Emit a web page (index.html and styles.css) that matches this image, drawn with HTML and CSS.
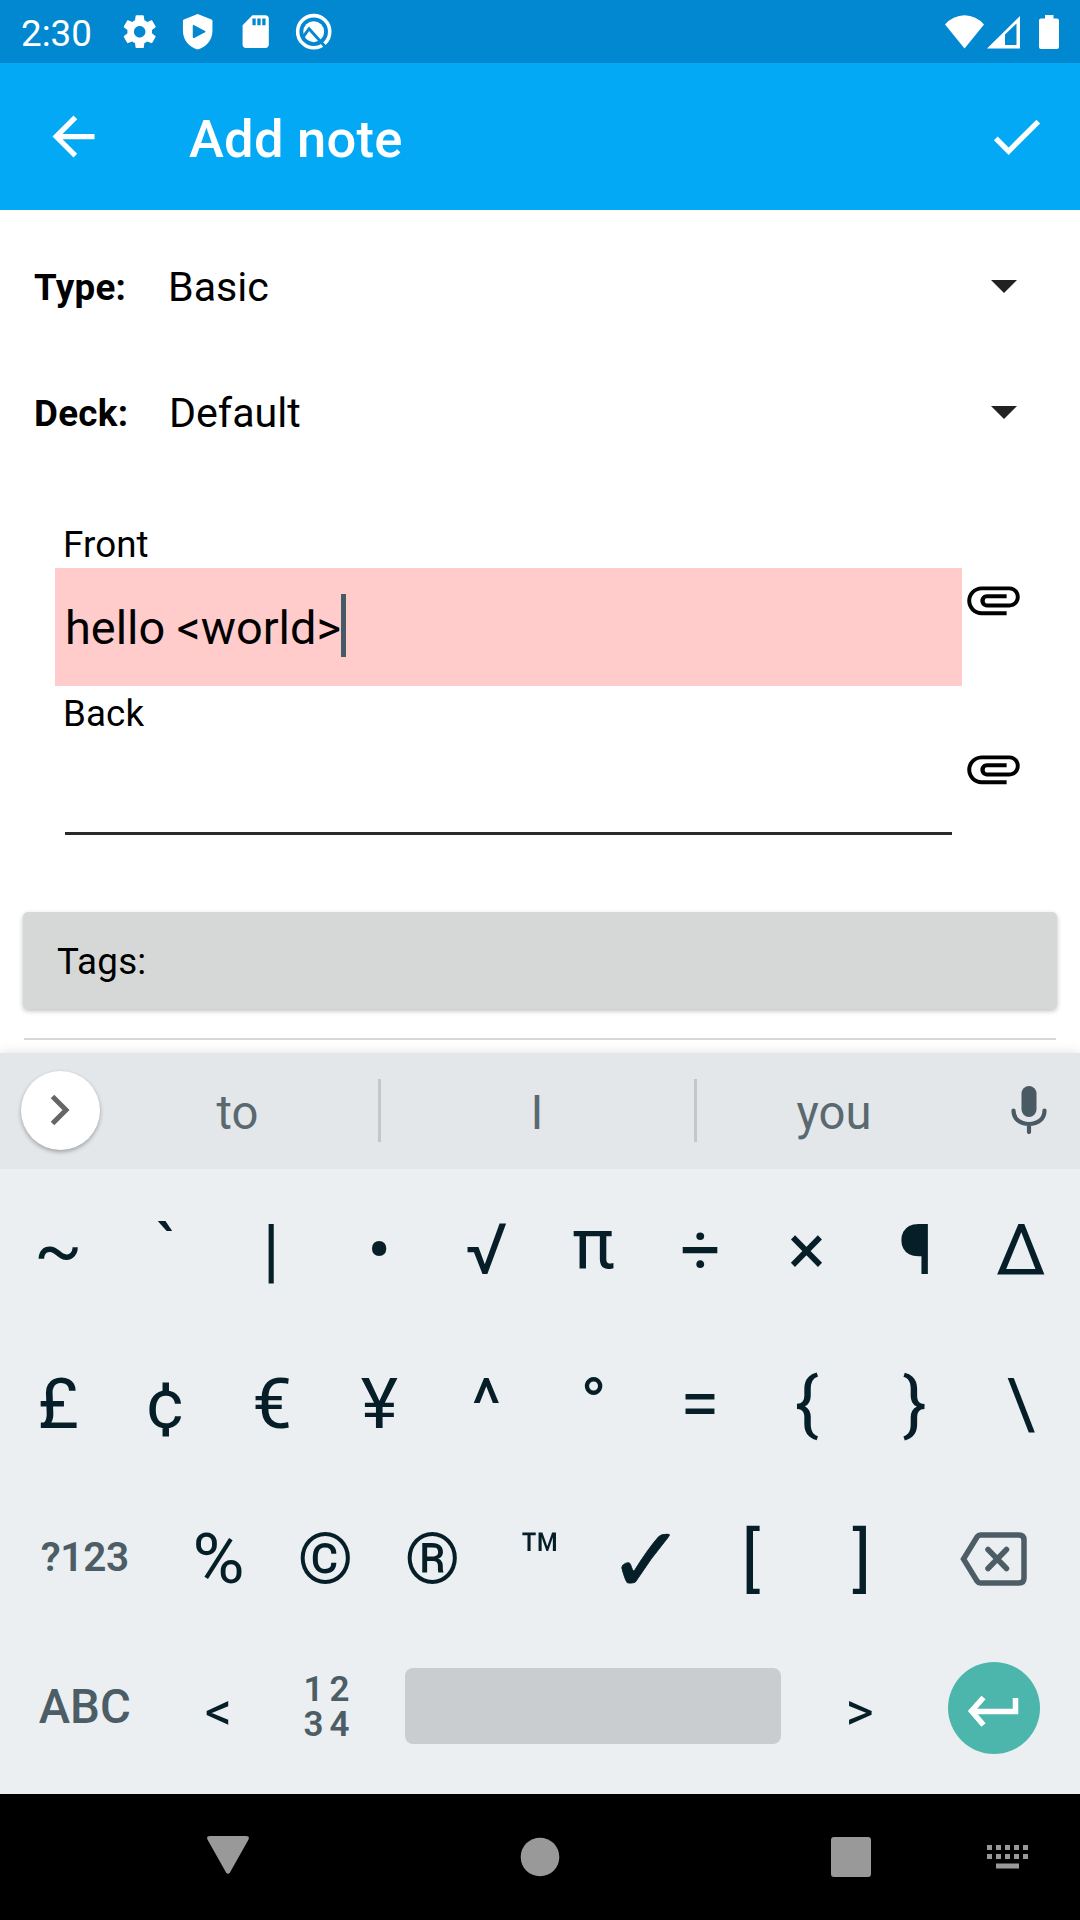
FILE: index.html
```html
<!DOCTYPE html>
<html lang="en">
<head>
<meta charset="utf-8">
<title>Add note</title>
<link rel="stylesheet" href="styles.css">
</head>
<body>
<div class="screen">
  <header class="status">
    <span class="clock">2:30</span>
    <div class="status-left">
      <svg class="sicon" viewBox="0 0 24 24"><path d="M19.43 12.98c.04-.32.07-.64.07-.98s-.03-.66-.07-.98l2.11-1.65c.19-.15.24-.42.12-.64l-2-3.46c-.12-.22-.39-.3-.61-.22l-2.49 1c-.52-.4-1.08-.73-1.69-.98l-.38-2.65C14.46 2.18 14.25 2 14 2h-4c-.25 0-.46.18-.49.42l-.38 2.65c-.61.25-1.17.59-1.69.98l-2.49-1c-.23-.09-.49 0-.61.22l-2 3.46c-.13.22-.07.49.12.64l2.11 1.65c-.04.32-.07.65-.07.98s.03.66.07.98l-2.11 1.65c-.19.15-.24.42-.12.64l2 3.46c.12.22.39.3.61.22l2.49-1c.52.4 1.08.73 1.69.98l.38 2.65c.03.24.24.42.49.42h4c.25 0 .46-.18.49-.42l.38-2.65c.61-.25 1.17-.59 1.69-.98l2.49 1c.23.09.49 0 .61-.22l2-3.46c.12-.22.07-.49-.12-.64l-2.11-1.65zM12 15.5c-1.93 0-3.5-1.57-3.5-3.5s1.57-3.5 3.5-3.5 3.5 1.57 3.5 3.5-1.57 3.500-3.5 3.500z"/></svg>
      <svg class="sicon" viewBox="0 0 40 40"><path fill-rule="evenodd" d="M20 2L34 7.500Q35 8 35 9V19C35 29 28 36 20 38C12 36 5 29 5 19V9Q5 8 6 7.500ZM15 13.500V25.500Q15 27 16.500 26.300L27.500 20.500Q28.500 20 27.500 19.300L16.500 13.500Q15 13 15 13.500Z"/></svg>
      <svg class="sicon" viewBox="0 0 24 24"><path d="M18 2h-8L4.020 8 4 20c0 1.100.9 2 2 2h12c1.100 0 2-.9 2-2V4c0-1.100-.9-2-2-2zm-6 6h-2V4h2v4zm3 0h-2V4h2v4zm3 0h-2V4h2v4z"/></svg>
      <svg class="sicon" viewBox="0 0 40 40"><circle cx="20" cy="20" r="16.300" fill="none" stroke="#fff" stroke-width="3.600"/><circle cx="20" cy="20" r="10.600"/><path d="M9.500 25L15.300 17L31.500 35" fill="none" stroke="#0288d1" stroke-width="3"/></svg>
    </div>
    <div class="status-right">
      <svg width="39" height="34" viewBox="0 0 39 34"><path d="M0 9.500Q8 0.500 19.500 0.300Q31 0.500 39 9.500L19.500 33.500Z"/></svg>
      <svg class="signal" width="33" height="34" viewBox="0 0 33 34"><path fill-rule="evenodd" d="M0 33.500L33 1V33.500ZM18 19.500V30H29.500V8.500Z"/></svg>
      <svg width="20" height="34" viewBox="0 0 20 34"><path d="M6 0H14.500V3.500H18Q20 3.500 20 5.500V32Q20 34 18 34H2Q0 34 0 32V5.500Q0 3.500 2 3.500H6Z"/></svg>
    </div>
  </header>

  <div class="appbar">
    <svg class="icon" viewBox="0 0 24 24"><path d="M20 11H7.830l5.590-5.590L12 4l-8 8 8 8 1.410-1.410L7.830 13H20v-2z"/></svg>
    <h1 class="title">Add note</h1>
    <svg class="icon" viewBox="0 0 24 24"><path d="M9 16.170L4.830 12l-1.420 1.410L9 19 21 7l-1.410-1.410z"/></svg>
  </div>

  <main class="form">
    <div class="picker"><b class="picker-label">Type:</b><span class="picker-value">Basic</span><svg width="26" height="13" viewBox="0 0 26 13"><path d="M0 0H26L13 13Z"/></svg></div>
    <div class="picker"><b class="picker-label deck">Deck:</b><span class="picker-value">Default</span><svg width="26" height="13" viewBox="0 0 26 13"><path d="M0 0H26L13 13Z"/></svg></div>
    <div class="fields">
      <label class="field-label">Front</label>
      <div class="field">
        <div class="input focused"><span>hello &lt;world&gt;</span><i class="caret"></i></div>
        <svg class="icon" viewBox="0 0 24 24"><path d="M2 12.500C2 9.460 4.460 7 7.500 7H18c2.210 0 4 1.790 4 4s-1.790 4-4 4H9.500C8.120 15 7 13.880 7 12.500S8.120 10 9.500 10H17v1.500H9.410c-1 0-1 2 0 2H18c1.400 0 2.500-1.100 2.500-2.500s-1.100-2.500-2.500-2.500H7.500c-2.200 0-4 1.800-4 4s1.800 4 4 4H17V18H7.500C4.460 18 2 15.540 2 12.500z"/></svg>
      </div>
      <label class="field-label second">Back</label>
      <div class="field">
        <div class="input"></div>
        <svg class="icon" viewBox="0 0 24 24"><path d="M2 12.500C2 9.460 4.460 7 7.500 7H18c2.210 0 4 1.790 4 4s-1.790 4-4 4H9.500C8.120 15 7 13.880 7 12.500S8.120 10 9.500 10H17v1.500H9.410c-1 0-1 2 0 2H18c1.400 0 2.500-1.100 2.500-2.500s-1.100-2.500-2.500-2.500H7.500c-2.200 0-4 1.800-4 4s1.800 4 4 4H17V18H7.500C4.460 18 2 15.540 2 12.500z"/></svg>
      </div>
    </div>
    <div class="tags">Tags:</div>
    <div class="next-button"></div>
  </main>

  <section class="keyboard">
    <div class="strip">
      <div class="expand"><svg width="20" height="32" viewBox="0 0 20 32"><path d="M2.500 2.500L16 16L2.500 29.500" fill="none" stroke="#666" stroke-width="5"/></svg></div>
      <span class="word">to</span><span class="word middle">I</span><span class="word last">you</span>
      <svg class="mic" width="36" height="48" viewBox="0 0 36 48"><rect x="10.500" y="0" width="15" height="31" rx="7.500" fill="#4a5a62"/><path d="M2.500 24.500C2.500 33 9 38 18 38S33.500 33 33.500 24.500M18 38V46" fill="none" stroke="#4a5a62" stroke-width="4.200" stroke-linecap="round"/></svg>
    </div>
    <div class="keys">
      <div class="row ten"><span>~</span><span class="nudge-right">`</span><span class="nudge-left">|</span><span>•</span><span>√</span><span class="pi">π</span><span>÷</span><span class="nudge-left">×</span><span class="nudge-right">¶</span><span class="nudge-left">∆</span></div>
      <div class="row ten"><span>£</span><span>¢</span><span>€</span><span>¥</span><span>^</span><span>°</span><span class="nudge-left">=</span><span class="nudge-left">{</span><span>}</span><span class="nudge-left">\</span></div>
      <div class="row nine"><span class="mode num">?123</span><span>%</span><span>©</span><span>®</span><span class="nudge-right">™</span><span class="tick">✓</span><span class="bracket-open">[</span><span class="nudge-right">]</span><span class="svgkey"><svg width="68" height="54" viewBox="0 0 68 54"><path d="M20.500 3H59Q64 3 64 8V46Q64 51 59 51H20.500Q18.500 51 17 49L3.500 27L17 5Q18.500 3 20.500 3Z" fill="none" stroke="#4d5d65" stroke-width="5.500"/><path d="M28 17.500L46.500 36.500M46.500 17.500L28 36.500" fill="none" stroke="#4d5d65" stroke-width="5.500" stroke-linecap="round"/></svg></span></div>
      <div class="row bottom"><span class="mode">ABC</span><span class="angle">&lt;</span><span class="numpad"><i>1</i><i>2</i><i>3</i><i>4</i></span><span class="space"></span><span class="angle nudge-left">&gt;</span><span class="svgkey enter"><svg width="92" height="92" viewBox="0 0 92 92"><circle cx="46" cy="46" r="46" fill="#4db6ac"/><path d="M35.500 35.500L23.500 49L35.500 63M24 49.500H67.500V36" fill="none" stroke="#fff" stroke-width="5.500"/></svg></span></div>
    </div>
  </section>

  <nav class="nav">
    <svg class="nav-back" width="42" height="38" viewBox="0 0 42 38"><path d="M3 0H39Q43 0 41.500 3.500L23 36.500Q21 39 19 36.500L0.500 3.500Q-1 0 3 0Z"/></svg>
    <svg class="nav-home" width="40" height="40" viewBox="0 0 40 40"><circle cx="20" cy="20" r="19.300"/></svg>
    <svg class="nav-recent" width="40" height="40" viewBox="0 0 40 40"><rect width="40" height="40" rx="3"/></svg>
    <svg width="41" height="24" viewBox="0 0 41 24"><path d="M0 0h5v5h-5zM9 0h5v5h-5zM18 0h5v5h-5zM27 0h5v5h-5zM36 0h5v5h-5zM0 9h5v5h-5zM9 9h5v5h-5zM18 9h5v5h-5zM27 9h5v5h-5zM36 9h5v5h-5zM9 18.500h23v5h-23z"/></svg>
  </nav>
</div>
</body>
</html>
```
FILE: styles.css
```css
* { box-sizing: border-box; }
body { margin: 0; font-family: Roboto, "Noto Sans", sans-serif; font-size: 36.75px; color: #000; background: #fff; }
svg { display: block; flex: none; }
i { font-style: normal; }
.screen { width: 1080px; height: 1920px; display: flex; flex-direction: column; overflow: hidden; }
.icon { width: 63px; height: 63px; }

.status { height: 63px; flex: none; background: #0288d1; color: #fff; fill: #fff; display: flex; align-items: center; padding: 0 21px; }
.clock { width: 99px; padding-top: 4px; line-height: 59px; }
.status-left { display: flex; gap: 18.700px; }
.sicon { width: 39.400px; height: 39.400px; }
.status-right { margin-left: auto; display: flex; gap: 3px; }
.signal { margin-right: 16px; }

.appbar { height: 147px; flex: none; background: #03a9f4; color: #fff; fill: #fff; display: flex; align-items: center; padding: 0 32px 0 42px; }
.title { margin: 0 auto 0 84px; padding-top: 4px; font-size: 52.500px; font-weight: 500; letter-spacing: .25px; }

.form { height: 843px; flex: none; padding-top: 14px; display: flex; flex-direction: column; }
.picker { height: 126px; flex: none; display: flex; align-items: center; padding: 0 63px 0 34px; fill: #212121; }
.picker svg { margin-bottom: 2px; }
.picker-label { width: 134px; padding-top: 1px; letter-spacing: .3px; }
.picker-label.deck { width: 135px; }
.picker-value { flex: 1; font-size: 41.200px; }
.fields { padding: 45px 55px 0; }
.field-label { display: block; height: 47px; line-height: 47px; padding-left: 8px; letter-spacing: .1px; }
.field-label.second { margin-top: 4px; }
.field { display: flex; fill: #000; }
.input { width: 907px; height: 98px; display: flex; align-items: center; font-size: 46.900px; padding-left: 10px; }
.input:empty::after { content: ""; align-self: flex-end; width: 887px; height: 3px; background: #2a2a2a; }
.focused { height: 118px; background: #ffcbcb; }
.caret { width: 5px; height: 63px; background: #455a64; margin-bottom: 4px; }
.tags { height: 97px; margin: 77px 23px 0; padding: 2px 0 0 34px; line-height: 95px; border-radius: 5px; background: #d6d8d7; box-shadow: 0 2px 5px rgba(0,0,0,.25); flex: none; letter-spacing: .2px; }
.next-button { height: 2px; margin: 29px 24px 0; background: #d6d8d7; }

.keyboard { height: 741px; flex: none; background: #ebeff2; color: #051e28; box-shadow: 0 0 12px rgba(0,0,0,.12); }
.strip { height: 116px; background: #e3e7ea; display: grid; grid-template-columns: 95px 286px 316px 272px 1fr; align-items: center; }
.expand { width: 79px; height: 79px; margin: 0 0 2px 21px; border-radius: 50%; background: #fff; box-shadow: 0 2px 4px rgba(0,0,0,.3); display: flex; align-items: center; padding-left: 29px; }
.word { height: 63px; margin-bottom: 1px; padding: 6px 0 0 2px; line-height: 57px; text-align: center; color: #5a6970; font-size: 47.250px; border-right: 3px solid #c3c7ca; }
.word.middle { padding-left: 0; padding-right: 1px; }
.word.last { border: 0; }
.mic { margin: 0 0 2px 42px; }
.keys { padding: 4px 4.500px 0; }
.row { display: grid; height: 154px; align-items: center; text-align: center; font-size: 71px; line-height: 154px; }
.ten { grid-template-columns: repeat(10, 1fr); }
.nine { grid-template-columns: 160.500px repeat(7, 107px) 160.500px; padding-top: 1px; }
.bottom { height: 144px; line-height: 144px; grid-template-columns: 160.500px 107px 107px 428px 107px 160.500px; }
.nudge-right { padding-left: 3px; }
.nudge-left { padding-right: 2px; }
.bracket-open { padding-right: 5px; }
.pi { padding-bottom: 12px; line-height: 142px; }
.tick { font-size: 92px; -webkit-text-stroke: .8px #051e28; padding-top: 4px; line-height: 150px; }
.mode { font-size: 47.250px; font-weight: 500; color: #4d5d65; }
.num { font-size: 40.500px; font-weight: 600; letter-spacing: -.3px; padding-bottom: 3px; line-height: 151px; }
.svgkey { display: flex; justify-content: center; }
.enter { padding-top: 2px; }
.angle { font-size: 54px; padding-top: 9px; line-height: 135px; }
.numpad { display: grid; grid-template-columns: 26px 26px; justify-content: center; line-height: 35.500px; font-size: 35px; font-weight: 600; color: #4d5d65; padding-left: 2px; }
.space { height: 76px; margin: 0 26px 2px; border-radius: 8px; background: #c9cdd0; }

.nav { height: 126px; flex: none; background: #000; fill: #999; display: flex; align-items: center; padding-left: 207px; }
.nav-back { margin: 0 271px 5px 0; }
.nav-home { margin-right: 271px; }
.nav-recent { margin-right: 116px; }
```
